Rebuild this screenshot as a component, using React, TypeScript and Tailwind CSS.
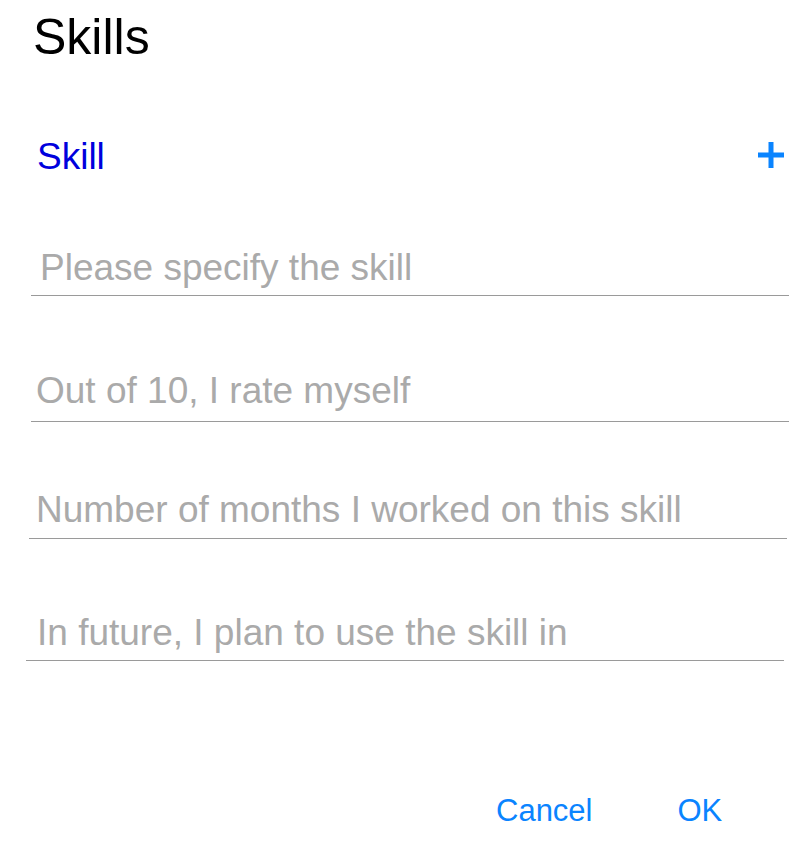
import React from "react";

export default function App() {
  return (
    <div className="w-[792px] h-[843px] bg-white font-['Liberation_Sans',Arial,sans-serif] flex flex-col">
      <h1 className="mt-[12px] pl-[33px] text-[50px] leading-none text-black">Skills</h1>
      <div className="mt-[76px] pl-[37px] pr-[8px] flex items-center justify-between">
        <span className="text-[37px] leading-none text-[#0000dd]">Skill</span>
        <svg width="26" height="26" viewBox="0 0 26 26" className="mb-[3px]">
          <rect x="10.5" y="0" width="5" height="26" fill="#0a84ff" />
          <rect x="0" y="10.5" width="26" height="5" fill="#0a84ff" />
        </svg>
      </div>
      <div className="ml-[31px] mt-[74px] w-[758px] flex flex-col">
        <div className="pl-[9px] text-[37px] leading-none text-[#aaaaaa] whitespace-nowrap">Please specify the skill</div>
        <div className="mt-[9px] h-px bg-[#9a9a9a]" />
      </div>
      <div className="ml-[31px] mt-[76px] w-[758px] flex flex-col">
        <div className="pl-[5px] text-[37px] leading-none text-[#aaaaaa] whitespace-nowrap">Out of 10, I rate myself</div>
        <div className="mt-[12px] h-px bg-[#9a9a9a]" />
      </div>
      <div className="ml-[29px] mt-[69px] w-[758px] flex flex-col">
        <div className="pl-[7px] text-[37px] leading-none text-[#aaaaaa] whitespace-nowrap">Number of months I worked on this skill</div>
        <div className="mt-[10px] h-px bg-[#9a9a9a]" />
      </div>
      <div className="ml-[26px] mt-[75px] w-[758px] flex flex-col">
        <div className="pl-[11px] text-[37px] leading-none text-[#aaaaaa] whitespace-nowrap">In future, I plan to use the skill in</div>
        <div className="mt-[9px] h-px bg-[#9a9a9a]" />
      </div>
      <div className="mt-[134px] pl-[496px] flex items-center gap-[85px] text-[31px] leading-none text-[#0a84ff]">
        <span>Cancel</span>
        <span>OK</span>
      </div>
    </div>
  );
}
